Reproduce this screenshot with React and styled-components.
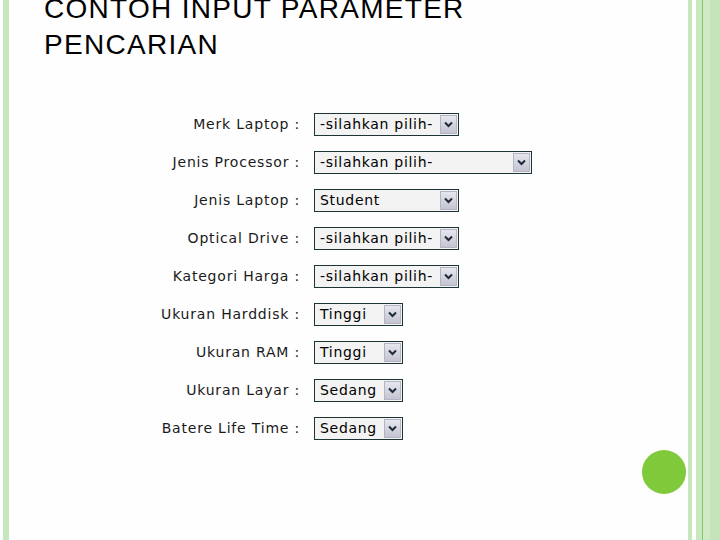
import React from 'react';
import styled, { createGlobalStyle } from 'styled-components';

const GlobalStyle = createGlobalStyle`
  html, body {
    margin: 0;
    padding: 0;
    background: #ffffff;
  }
  #root {
    width: 720px;
    height: 540px;
    overflow: hidden;
  }
`;

const Page = styled.div`
  display: flex;
  width: 720px;
  height: 540px;
  overflow: hidden;
  background: #fefefe;
`;

const LeftRail = styled.div`
  width: 6px;
  margin-left: 3px;
  flex-shrink: 0;
  background: #c6e6bb;
`;

const Main = styled.div`
  flex: 1;
  display: flex;
  flex-direction: column;
`;

const RightRail = styled.div`
  width: 32px;
  flex-shrink: 0;
  background: linear-gradient(
    to right,
    #c6e6bb 0px,
    #c6e6bb 4px,
    #ffffff 4px,
    #ffffff 8px,
    #c8e8bd 8px,
    #c8e8bd 14px,
    #8cc46c 14px,
    #8cc46c 15px,
    #cfeac4 15px,
    #cfeac4 22px,
    #c4e3b8 22px,
    #c4e3b8 32px
  );
`;

const Title = styled.h1`
  margin: -9px 0 0 35px;
  font-family: 'Liberation Sans', Arial, sans-serif;
  font-weight: normal;
  font-size: 28px;
  line-height: 36px;
  letter-spacing: 1.3px;
  color: #000000;
  white-space: nowrap;
`;

const Form = styled.div`
  display: grid;
  grid-template-columns: 291px auto;
  grid-auto-rows: 38px;
  column-gap: 14px;
  margin-top: 42px;
  align-items: center;
  justify-items: start;
`;

const Label = styled.div`
  justify-self: end;
  font-family: 'DejaVu Sans', Verdana, sans-serif;
  font-size: 14px;
  letter-spacing: 0.8px;
  color: #1a1a1a;
  white-space: nowrap;
`;

const SelectBox = styled.div`
  display: flex;
  align-items: center;
  box-sizing: border-box;
  width: ${(p) => p.$width}px;
  height: 23px;
  border: 1px solid #1c3434;
  background: #f3f3f3;
  padding: 1px;
`;

const Value = styled.span`
  flex: 1;
  padding-left: 4px;
  font-family: 'DejaVu Sans', Verdana, sans-serif;
  font-size: 14px;
  letter-spacing: 0.7px;
  color: #000000;
  white-space: nowrap;
  overflow: hidden;
`;

const ArrowButton = styled.div`
  display: flex;
  align-items: center;
  justify-content: center;
  box-sizing: border-box;
  width: 17px;
  height: 19px;
  flex-shrink: 0;
  border: 1px solid #b4b4c6;
  background: linear-gradient(to bottom, #e6e6ee, #c4c4d2);
`;

const Footer = styled.div`
  display: flex;
  justify-content: flex-end;
  margin-top: 3px;
  padding-right: 2px;
`;

const Dot = styled.div`
  width: 44px;
  height: 44px;
  border-radius: 50%;
  background: #7fc93b;
`;

const Chevron = () => (
  <svg width="9" height="7" viewBox="0 0 9 7">
    <path d="M1 1.5 L4.5 5 L8 1.5" fill="none" stroke="#1e2a3a" strokeWidth="2" />
  </svg>
);

const Select = ({ value, width }) => (
  <SelectBox $width={width}>
    <Value>{value}</Value>
    <ArrowButton>
      <Chevron />
    </ArrowButton>
  </SelectBox>
);

const fields = [
  { label: 'Merk Laptop :', value: '-silahkan pilih-', width: 145 },
  { label: 'Jenis Processor :', value: '-silahkan pilih-', width: 218 },
  { label: 'Jenis Laptop :', value: 'Student', width: 145 },
  { label: 'Optical Drive :', value: '-silahkan pilih-', width: 145 },
  { label: 'Kategori Harga :', value: '-silahkan pilih-', width: 145 },
  { label: 'Ukuran Harddisk :', value: 'Tinggi', width: 89 },
  { label: 'Ukuran RAM :', value: 'Tinggi', width: 89 },
  { label: 'Ukuran Layar :', value: 'Sedang', width: 89 },
  { label: 'Batere Life Time :', value: 'Sedang', width: 89 },
];

export default function App() {
  return (
    <>
      <GlobalStyle />
      <Page>
        <LeftRail />
        <Main>
          <Title>
            CONTOH INPUT PARAMETER
            <br />
            PENCARIAN
          </Title>
          <Form>
            {fields.map((f) => (
              <React.Fragment key={f.label}>
                <Label>{f.label}</Label>
                <Select value={f.value} width={f.width} />
              </React.Fragment>
            ))}
          </Form>
          <Footer>
            <Dot />
          </Footer>
        </Main>
        <RightRail />
      </Page>
    </>
  );
}
